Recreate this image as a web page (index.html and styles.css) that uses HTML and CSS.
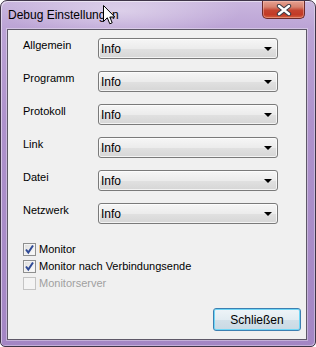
FILE: index.html
```html
<!DOCTYPE html>
<html lang="de">
<head>
    <meta charset="UTF-8">
    <title>Debug Einstellungen</title>
    <link rel="stylesheet" href="styles.css">
</head>
<body>
    <div class="window">
        <div class="titlebar">
            <span class="title">Debug Einstellungen</span>
            <div class="close-btn">
                <svg width="16" height="12" viewBox="0 0 16 12">
                    <path d="M3 2 L13 10 M13 2 L3 10" stroke="#3b3b46" stroke-width="4.4" stroke-linecap="round"/>
                    <path d="M3 2 L13 10 M13 2 L3 10" stroke="#ffffff" stroke-width="2.4" stroke-linecap="round"/>
                </svg>
            </div>
        </div>

        <div class="client">
            <div class="fields">
                <span class="label">Allgemein</span>
                <div class="combo"><span>Info</span><i class="arrow"></i></div>
                <span class="label">Programm</span>
                <div class="combo"><span>Info</span><i class="arrow"></i></div>
                <span class="label">Protokoll</span>
                <div class="combo"><span>Info</span><i class="arrow"></i></div>
                <span class="label">Link</span>
                <div class="combo"><span>Info</span><i class="arrow"></i></div>
                <span class="label">Datei</span>
                <div class="combo"><span>Info</span><i class="arrow"></i></div>
                <span class="label">Netzwerk</span>
                <div class="combo"><span>Info</span><i class="arrow"></i></div>
            </div>

            <div class="checks">
                <label class="check">
                    <span class="box checked">
                        <svg width="11" height="11" viewBox="0 0 11 11"><path d="M2 5.5 L4.3 8.5 L9 1.5" fill="none" stroke="#2f4a96" stroke-width="2"/></svg>
                    </span>
                    Monitor
                </label>
                <label class="check">
                    <span class="box checked">
                        <svg width="11" height="11" viewBox="0 0 11 11"><path d="M2 5.5 L4.3 8.5 L9 1.5" fill="none" stroke="#2f4a96" stroke-width="2"/></svg>
                    </span>
                    Monitor nach Verbindungsende
                </label>
                <label class="check disabled">
                    <span class="box"></span>
                    Monitorserver
                </label>
            </div>

            <div class="footer">
                <button class="btn">Schließen</button>
            </div>
        </div>

        <!-- mouse pointer over the title -->
        <svg class="cursor" width="13" height="21" viewBox="0 0 13 21">
            <path d="M0.5 0.5 L0.5 16.5 L4.3 12.8 L6.8 18.8 L9.2 17.8 L6.8 12 L11.8 12 Z" fill="#ffffff" stroke="#000000" stroke-width="1"/>
        </svg>
    </div>
</body>
</html>
```

FILE: styles.css
```css
body {
    margin: 0;
    padding: 0;
    background-color: #ffffff;
    font-family: 'Liberation Sans', Arial, sans-serif;
}

.window {
    position: relative;
    box-sizing: border-box;
    width: 316px;
    height: 347px;
    display: flex;
    flex-direction: column;
    padding: 0 8px 6px 6px;
    border: 1px solid #3f3548;
    border-radius: 7px 7px 5px 5px;
    background:
        radial-gradient(ellipse 120px 28px at 120px 10px, rgba(255, 255, 255, 0.4), rgba(255, 255, 255, 0)),
        linear-gradient(to bottom, #c9b6de 0, #bba3d5 28px, #ae92cc 120px, #a386c4 100%);
    box-shadow: inset 1px 1px 0 rgba(255, 255, 255, 0.5), inset -1px -1px 0 rgba(255, 255, 255, 0.35);
}

.titlebar {
    height: 28px;
    display: flex;
    align-items: flex-start;
}

.title {
    padding: 7px 0 0 1px;
    font-family: 'Liberation Sans', Arial, sans-serif;
    font-size: 12px;
    line-height: 15px;
    color: #000000;
}

.close-btn {
    margin-left: auto;
    margin-right: 2px;
    width: 43px;
    height: 18px;
    box-sizing: border-box;
    display: flex;
    align-items: center;
    justify-content: center;
    border: 1px solid #6b2a2a;
    border-top: none;
    border-radius: 0 0 5px 5px;
    background: linear-gradient(to bottom, #e6a191 0%, #d7826f 35%, #c44430 55%, #c23a26 80%, #d4603f 100%);
    box-shadow: inset 0 0 0 1px rgba(255, 210, 200, 0.4);
}

.client {
    flex: 1;
    display: flex;
    flex-direction: column;
    background-color: #f0f0f0;
    border: 1px solid #5e5868;
    box-shadow: 0 0 0 1px rgba(255, 255, 255, 0.35);
}

.fields {
    display: grid;
    grid-template-columns: 75px 180px;
    grid-auto-rows: 21px;
    row-gap: 12px;
    padding: 8px 0 0 15px;
}

.label {
    font-size: 11px;
    line-height: 14px;
    color: #000000;
}

.combo {
    box-sizing: border-box;
    display: flex;
    align-items: center;
    padding: 0 0 0 2px;
    border: 1px solid #7a7a7a;
    border-radius: 3px;
    background: linear-gradient(to bottom, #f6f6f6 0%, #ececec 50%, #e1e1e1 51%, #d6d6d6 100%);
    box-shadow: inset 0 0 0 1px rgba(255, 255, 255, 0.7);
    font-size: 12px;
    color: #000000;
}

.combo span {
    padding-top: 1px;
}

.arrow {
    margin-left: auto;
    margin-right: 5px;
    width: 0;
    height: 0;
    border-left: 4px solid transparent;
    border-right: 4px solid transparent;
    border-top: 4px solid #000000;
}

.checks {
    display: flex;
    flex-direction: column;
    gap: 1px;
    margin-top: 17px;
    padding-left: 15px;
}

.check {
    height: 16px;
    display: flex;
    align-items: center;
    gap: 3px;
    font-size: 11px;
    color: #000000;
}

.box {
    box-sizing: border-box;
    width: 13px;
    height: 13px;
    display: flex;
    align-items: center;
    justify-content: center;
    border: 1px solid #8e8f8f;
    background: linear-gradient(to bottom right, #dcdcdc, #fdfdfd);
    box-shadow: inset 0 0 0 1px #f4f4f4;
}

.check.disabled {
    color: #a0a0a0;
}

.check.disabled .box {
    border-color: #c4c4c4;
    background: #f4f4f4;
}

.footer {
    margin-top: auto;
    display: flex;
    justify-content: flex-end;
    padding: 0 5px 8px 0;
}

.btn {
    width: 88px;
    height: 23px;
    padding: 0;
    border: 1px solid #3c7fb1;
    border-radius: 3px;
    background: linear-gradient(to bottom, #eef4f8 0%, #e2ecf2 50%, #d2e0e9 51%, #c9d9e4 100%);
    box-shadow: inset 0 0 0 1px #6fd6f6;
    font-family: 'Liberation Sans', Arial, sans-serif;
    font-size: 12px;
    color: #000000;
}

.cursor {
    position: absolute;
    left: 102px;
    top: 4px;
}
```
